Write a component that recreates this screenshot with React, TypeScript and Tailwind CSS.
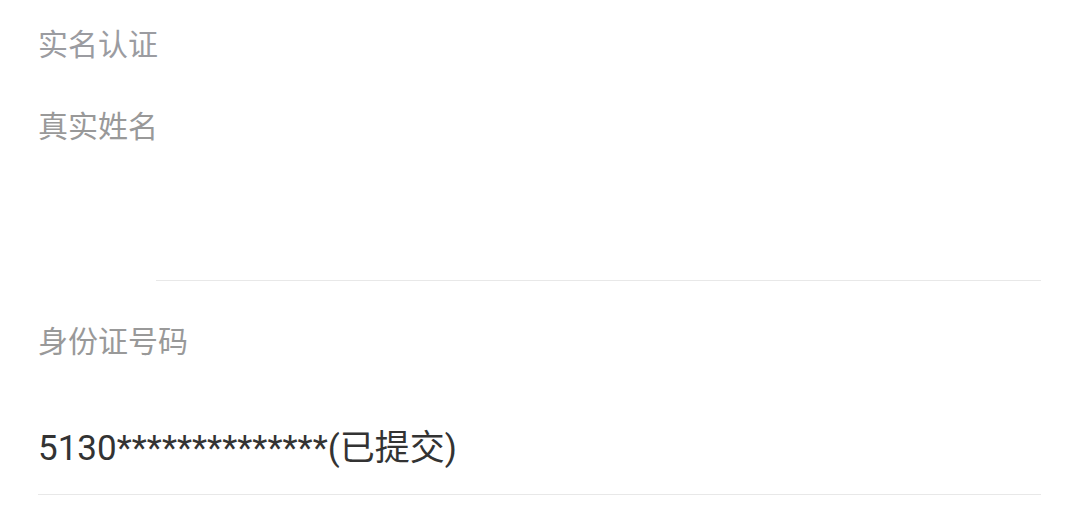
export default function App() {
  return (
    <div
      className="w-[1078px] h-[522px] bg-white pl-[38px] pr-[37px]"
      style={{ fontFamily: 'Roboto, "Noto Sans CJK SC", sans-serif' }}
    >
      {/* Section title */}
      <div className="h-[90px] pt-[26px] text-[30px] leading-[38px] text-[#9b9ca1]">实名认证</div>

      {/* Real name */}
      <div className="text-[30px] leading-[38px] text-[#999999] pt-[18px]">真实姓名</div>
      <div className="ml-[118px] h-[135px] border-b border-[#e8e8e8]" />

      {/* ID number */}
      <div className="pt-[42px] text-[30px] leading-[38px] text-[#999999]">身份证号码</div>
      <div className="pt-[68px] pb-[25px] text-[35px] leading-[40px] text-[#333333] border-b border-[#e8e8e8]">
        5130**************(已提交)
      </div>
    </div>
  );
}
